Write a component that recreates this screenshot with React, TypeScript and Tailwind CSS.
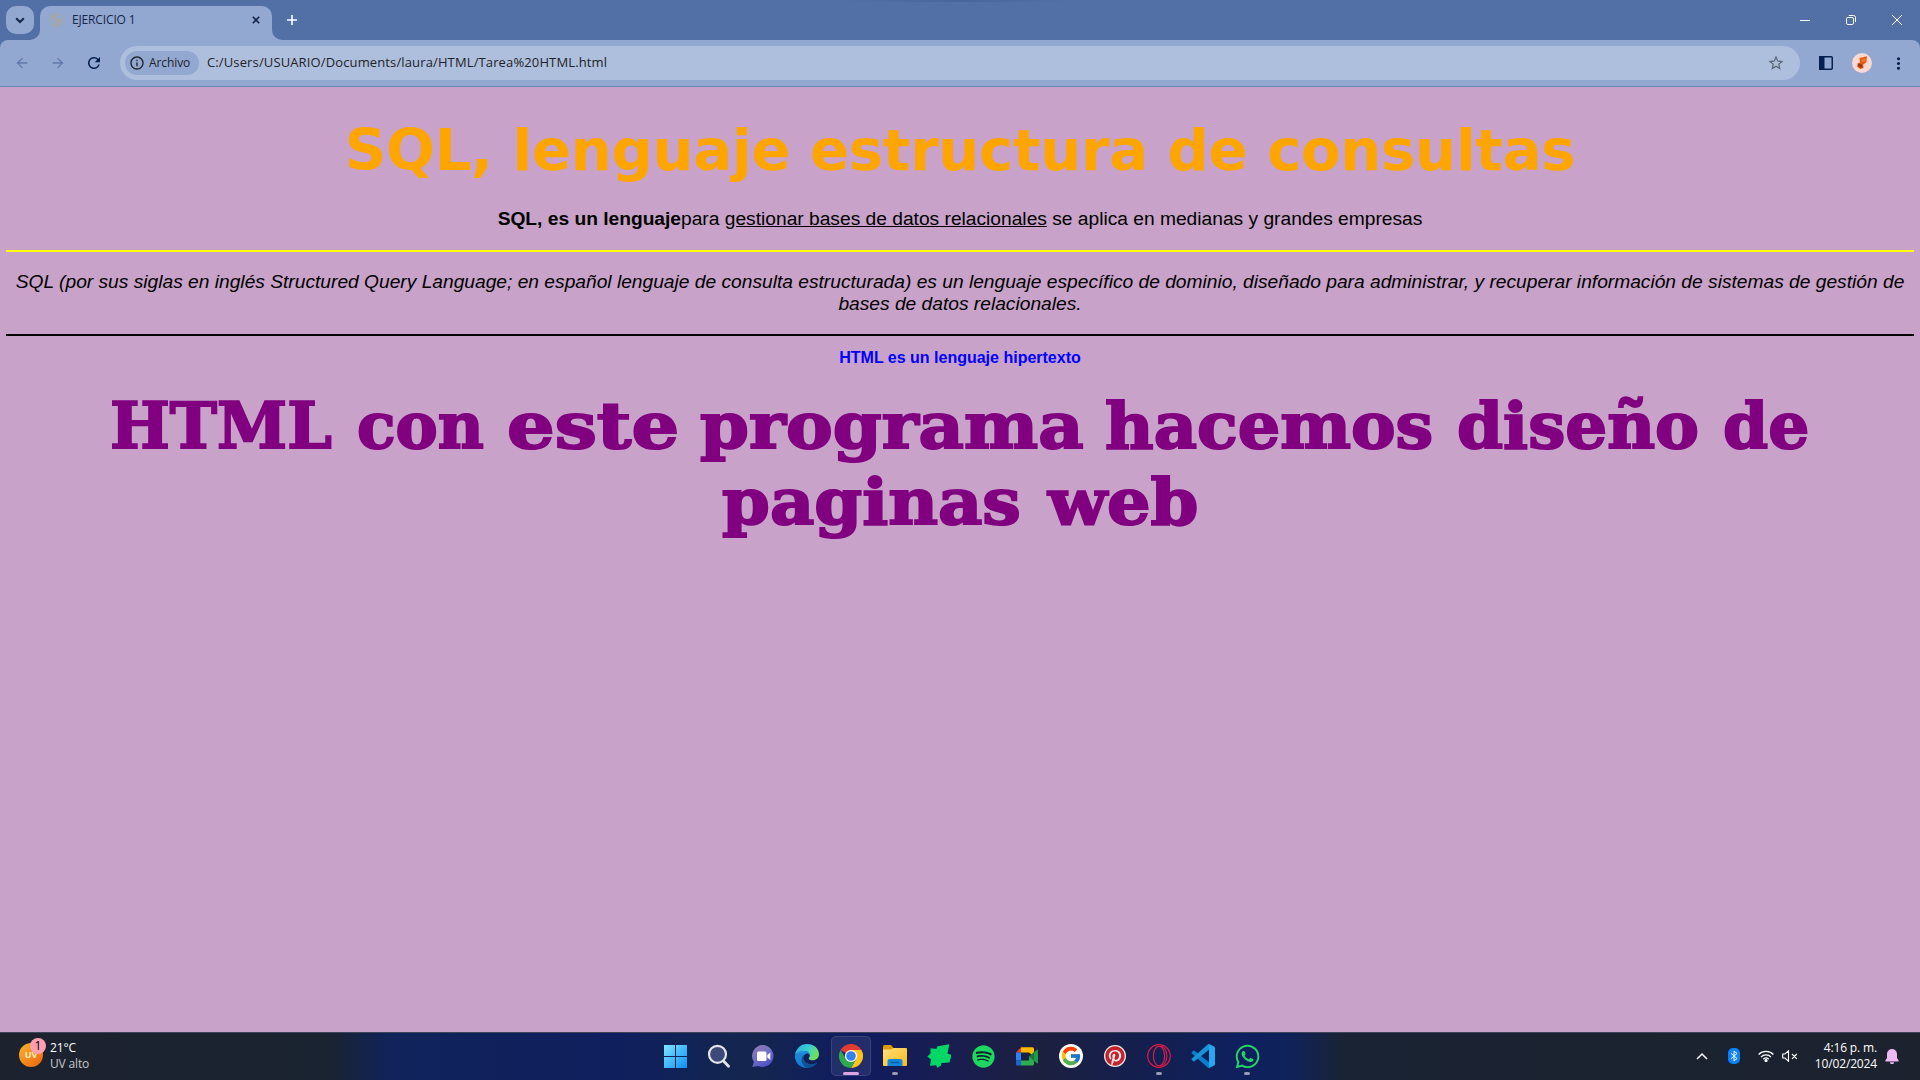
import type { ReactNode } from "react";
import { FaSpotify, FaPinterest, FaWhatsapp } from "react-icons/fa";
import { FcGoogle } from "react-icons/fc";
import { MdStarBorder, MdRefresh, MdArrowBack, MdArrowForward, MdInfoOutline, MdMoreVert } from "react-icons/md";

function TabStrip() {
  return (
    <div className="flex h-10 items-end bg-[#5270a5] text-[#16264a]">
      <div className="mb-1.5 ml-1.5 flex size-7 items-center justify-center rounded-[10px] bg-[#92a8d1]">
        <svg viewBox="0 0 10 10" className="size-2.5" fill="none" stroke="#16264a" strokeWidth="2">
          <path d="M1.2 3.2 5 7l3.8-3.8" />
        </svg>
      </div>
      <div className="relative ml-1.5 flex h-[34px] w-[232px] items-center rounded-t-[10px] bg-[#92a8d1] pb-1.5">
        <svg className="absolute -left-2.5 bottom-0 size-2.5" viewBox="0 0 10 10" fill="#92a8d1"><path d="M10 0v10H0A10 10 0 0 0 10 0z" /></svg>
        <svg className="absolute -right-2.5 bottom-0 size-2.5" viewBox="0 0 10 10" fill="#92a8d1"><path d="M0 0v10h10A10 10 0 0 1 0 0z" /></svg>
        <svg viewBox="0 0 14 14" className="ml-[9px] size-3.5">
          <circle cx="7" cy="7" r="7" fill="#a3a5a9" />
          <path d="M1.500 5.500c2-.5 3 .5 4 2s-.5 2 .5 4.500C3 12 1 9.500 1.200 7zM8 1.600c-2 1-1.500 2-.5 3s2.500.5 3 1.500 2 .8 2 .8C12.500 4 10.500 2 8 1.600zM9 9.500l2.500-.5-2 2.800z" fill="#92a8d1" />
        </svg>
        <span className="ml-[9px] text-[12px] tracking-[-0.15px]">EJERCICIO 1</span>
        <svg viewBox="0 0 10 10" className="mr-3 ml-auto size-2" fill="none" stroke="#16264a" strokeWidth="2">
          <path d="m1 1 8 8M9 1l-8 8" />
        </svg>
      </div>
      <svg viewBox="0 0 10 10" className="mb-[15px] ml-[15px] size-2.5" stroke="white" strokeWidth="1.6"><path d="M5 0v10M0 5h10" /></svg>
      <span className="ml-[543px] h-0.5 w-[235px] self-start bg-linear-to-r from-transparent via-[#49669a] to-transparent" />
      <div className="mb-[15px] ml-auto flex items-center gap-9 pr-[18px]">
        <svg viewBox="0 0 10 10" className="size-2.5" stroke="white"><path d="M0 5.500h10" /></svg>
        <svg viewBox="0 0 10 10" className="size-2.5" fill="none" stroke="white">
          <rect x=".5" y="2.500" width="7" height="7" rx="1.400" />
          <path d="M2.800.5h4.700a2 2 0 0 1 2 2v4.700" />
        </svg>
        <svg viewBox="0 0 10 10" className="size-2.5" stroke="white"><path d="m0 0 10 10M10 0 0 10" /></svg>
      </div>
    </div>
  );
}

function Toolbar() {
  return (
    <div className="bg-[#5270a5]">
      <div className="flex h-[47px] items-center rounded-t-lg border-b border-[#6c84b7] bg-[#92a8d1] text-[#16264a]">
        <MdArrowBack className="ml-[14px] size-4 text-[#6079aa]" />
        <MdArrowForward className="ml-5 size-4 text-[#6079aa]" />
        <MdRefresh className="ml-[19px] size-[18px] text-[#03204f]" />
        <div className="ml-[17px] flex h-[34px] w-[1680px] items-center rounded-full bg-[#aebfdd] pl-[5px]">
          <div className="flex h-6 w-[74px] items-center rounded-full bg-[#92a8d1] pl-[4px] text-[#1f2228]">
            <MdInfoOutline className="size-4" />
            <span className="ml-1 text-[12px] font-medium tracking-[-0.1px]">Archivo</span>
          </div>
          <span className="ml-2 text-[13px] tracking-[0.13px] text-[#1f2228]">C:/Users/USUARIO/Documents/laura/HTML/Tarea%20HTML.html</span>
          <MdStarBorder className="mr-[15px] ml-auto size-[18px] text-[#5b6472]" />
        </div>
        <svg viewBox="0 0 16 16" className="ml-[18px] size-4">
          <rect x="1.750" y="1.750" width="12.500" height="12.500" rx="1" fill="none" stroke="#03204f" strokeWidth="1.500" />
          <path d="M1 1h5.500v14H1z" fill="#03204f" />
        </svg>
        <svg viewBox="0 0 20 20" className="ml-[18px] size-5">
          <circle cx="10" cy="10" r="10" fill="#fbd8d2" />
          <path d="M7.500 5 15 3.200l-.8 6.300-3 2 .3 3.500-3 1-3.500-2.500 1-3 2-1z" fill="#e8590f" />
          <path d="m5.500 10.500 4 .5 1.200 4-4-.8z" fill="#9f3516" />
          <path d="m9 8 2.500 1 2.500-2-2-2z" fill="#f47a2a" />
        </svg>
        <MdMoreVert className="ml-[17px] size-[19px] text-[#03204f]" />
      </div>
    </div>
  );
}

function Word({ children, width, stretch }: { children: string; width: string; stretch: string }) {
  return (
    <span className={width}>
      <span className={`inline-block origin-left whitespace-nowrap ${stretch}`}>{children}</span>
    </span>
  );
}

function Page() {
  return (
    <main className="flex-1 overflow-hidden bg-[#c8a2c8] px-1.5 pt-[29px] text-center font-['Liberation_Sans',Arial,sans-serif] text-[19.2px] leading-[22px] text-black">
      <h1 className="font-['DejaVu_Sans',Verdana,sans-serif] text-[57.6px] leading-[70px] font-bold tracking-[-0.25px] text-[orange]">
        SQL, lenguaje estructura de consultas
      </h1>
      <p className="mt-[22px]">
        <b>SQL, es un lenguaje</b>para <u className="underline">gestionar bases de datos relacionales</u> se aplica en medianas y grandes empresas
      </p>
      <hr className="mt-5 h-0.5 border-0 bg-[#ffff00]" />
      <p className="mt-[19px] italic">
        SQL (por sus siglas en inglés Structured Query Language; en español lenguaje de consulta estructurada) es un lenguaje específico de dominio, diseñado para administrar, y recuperar información de sistemas de gestión de bases de datos relacionales.
      </p>
      <hr className="mt-[19px] h-0.5 border-0 bg-black" />
      <p className="mt-[13px] text-base leading-[18px] font-bold text-[#0000ff]">HTML es un lenguaje hipertexto</p>
      <h2 className="mt-[21px] text-left font-['DejaVu_Serif',serif] text-[64px] leading-[76px] font-bold text-[#800080] [-webkit-text-stroke:2px_#800080]">
        <span className="ml-[104px] flex">
          <Word width="w-[247px]" stretch="scale-x-[0.99]">HTML</Word>
          <Word width="w-[150px]" stretch="scale-x-[0.99]">con</Word>
          <Word width="w-[193px]" stretch="scale-x-[1.17]">este</Word>
          <Word width="w-[405px]" stretch="scale-x-[1.095]">programa</Word>
          <Word width="w-[352px]" stretch="scale-x-[1.045]">hacemos</Word>
          <Word width="w-[266px]" stretch="scale-x-[1.03]">diseño</Word>
          <Word width="w-[86px]" stretch="scale-x-[1.01]">de</Word>
        </span>
        <span className="ml-[716px] flex">
          <Word width="w-[326px]" stretch="scale-x-[1.07]">paginas</Word>
          <Word width="w-[150px]" stretch="scale-x-[1.07]">web</Word>
        </span>
      </h2>
    </main>
  );
}

function TaskIcon({ children, active, running }: { children: ReactNode; active?: boolean; running?: boolean }) {
  return (
    <div className="flex w-11 justify-center">
      <div className={`relative flex size-10 items-center justify-center rounded-[5px] ${active ? "border border-white/10 bg-white/8" : ""}`}>
        {children}
        {active && <span className="absolute bottom-0 h-[3px] w-4 rounded-full bg-[#dda3e4]" />}
        {running && <span className="absolute bottom-px h-[3px] w-1.5 rounded-full bg-[#979cb2]" />}
      </div>
    </div>
  );
}

function Taskbar() {
  return (
    <footer className="grid h-12 grid-cols-[653px_616px_1fr] items-center border-t border-[#3b4458] bg-[linear-gradient(90deg,#1c222e_0px,#1a2331_330px,#10235a_390px,#0f1f5e_620px,#14264e_750px,#101c60_850px,#181d52_940px,#1c2040_1040px,#131f50_1150px,#0e205e_1240px,#10225a_1290px,#1a2333_1345px,#1c222e_1920px)] pb-px text-white">
      <div className="flex items-center pl-[19px] text-[12px] leading-4 tracking-[-0.15px]">
        <div className="relative mb-0.5 flex size-6 items-center justify-center rounded-full bg-linear-to-br from-[#f3b62c] to-[#ee5f0c] text-[9px] font-bold tracking-normal text-[#ffedc4]">
          UV
          <span className="absolute -top-[5px] left-[11px] flex size-4 items-center justify-center rounded-full bg-[#ff9fb0] text-[12px] font-normal text-black">1</span>
        </div>
        <div className="ml-[7px]">
          <p>21°C</p>
          <p className="text-[#c4c7cc]">UV alto</p>
        </div>
      </div>
      <nav className="flex items-center">
        <TaskIcon>
          <svg viewBox="0 0 23 23" className="size-[23px]">
            <defs><linearGradient id="win" x2="1" y2="1"><stop stopColor="#7fe5ff" /><stop offset="1" stopColor="#0c8ff5" /></linearGradient></defs>
            <path d="M0 0h11v11H0zM12 0h11v11H12zM0 12h11v11H0zM12 12h11v11H12z" fill="url(#win)" />
          </svg>
        </TaskIcon>
        <TaskIcon>
          <svg viewBox="0 0 24 24" className="size-6" fill="#3c4979" stroke="#e3e5e9" strokeWidth="2.200">
            <path d="m16.500 17 5 5.200" strokeWidth="2.800" strokeLinecap="round" />
            <circle cx="10.500" cy="10.300" r="8.500" />
          </svg>
        </TaskIcon>
        <TaskIcon>
          <svg viewBox="0 0 24 24" className="size-6">
            <defs><linearGradient id="chat" x2=".6" y2="1"><stop stopColor="#9b78ad" /><stop offset=".5" stopColor="#7273c4" /><stop offset="1" stopColor="#4d50c9" /></linearGradient></defs>
            <path d="M12.500 1A11 11 0 1 1 7 22L1.300 23l1.600-5A11 11 0 0 1 12.500 1z" fill="url(#chat)" />
            <rect x="6" y="7.500" width="9.500" height="9.500" rx="1.500" fill="white" />
            <path d="m16.300 11 3-2.500v7.500l-3-2.500z" fill="white" />
          </svg>
        </TaskIcon>
        <TaskIcon>
          <svg viewBox="0 0 24 24" className="size-6">
            <defs>
              <linearGradient id="edgeTop" x2="1" y2=".4"><stop stopColor="#2aa7e4" /><stop offset=".55" stopColor="#37cfd6" /><stop offset="1" stopColor="#6fe05a" /></linearGradient>
              <linearGradient id="edgeLow" x2=".8" y2="1"><stop stopColor="#28a5e9" /><stop offset="1" stopColor="#0b55ae" /></linearGradient>
            </defs>
            <path d="M0 11.500C.6 4.800 5.500 0 12 0c7 0 12 4.700 12 10.300 0 3.700-2.900 6-6.200 6-2.500 0-4.100-.8-4.100-1.800 0-.8 1.100-1.200 1.100-3.200C14.800 9 12.500 7 9.300 6.900 5 6.800 1.300 8.700 0 11.500z" fill="url(#edgeTop)" />
            <path d="M0 12C1 8.700 4.600 6.500 8.600 6.700c3.500.2 6.200 2.100 6.200 4.700-.8-1.500-2.200-2-3.300-1.700-3 .8-4 4-2.500 6.800 2 3.800 7.500 5.200 12.800 2.200.3-.2.500.1.400.4C20 22 16.200 24 12.200 24 5 24 0 18.500 0 12z" fill="url(#edgeLow)" />
            <path d="M9 9.500c-2.400 1.800-3.500 4.900-2.500 8 1 3.200 3.400 5.500 6 6.500C5 24 0 18.500 0 12c2-3 5.500-4 9-2.500z" fill="#1482da" opacity=".65" />
            <path d="M11.500 9.700c-3 .8-4 4-2.500 6.800 2 3.800 7.500 5.200 12.800 2.200l.4.400C20 22 16.200 24 12.200 24 7.700 22 5.500 17.500 7 13.500c.8-2.200 2.500-3.500 4.500-3.800z" fill="#114a8b" opacity=".8" />
          </svg>
        </TaskIcon>
        <TaskIcon active>
          <svg viewBox="0 0 24 24" className="size-6">
            <path d="M12 12 1.600 6A12 12 0 0 1 22.400 6z" fill="#e33b2e" />
            <path d="M12 12 22.400 6A12 12 0 0 1 12 24l5-9z" fill="#fcc31e" />
            <path d="M12 12 7 15 1.600 6A12 12 0 0 0 12 24l5-9z" fill="#2da94f" />
            <path d="M12 6h10.400L17.200 15z" fill="#fcc31e" />
            <circle cx="12" cy="12" r="6.100" fill="white" />
            <circle cx="12" cy="12" r="4.800" fill="#357ff0" />
          </svg>
        </TaskIcon>
        <TaskIcon running>
          <svg viewBox="0 0 24 24" className="size-6">
            <defs><linearGradient id="folder" x2="1" y2="1"><stop stopColor="#ffe07c" /><stop offset="1" stopColor="#fbb91c" /></linearGradient></defs>
            <path d="M0 2.500Q0 1 1.500 1H8l2.500 3-2 4H0z" fill="#dd9c05" />
            <path d="M0 5.500h8L10.500 4H23q1 0 1 1v16q0 1-1 1H1q-1 0-1-1z" fill="url(#folder)" />
            <path d="M4.500 22v-5q0-2 2-2h11q2 0 2 2v5z" fill="#1287dc" />
            <path d="M8 18.500h8" stroke="#0a5ca8" strokeWidth="1.300" strokeLinecap="round" />
          </svg>
        </TaskIcon>
        <TaskIcon>
          <svg viewBox="0 0 24 24" className="size-6"><path d="M3.500 4.300 9.500 5l1-2.800L22.300.2 20.500 9.500l4 1.500-2 7.500-8 .5-.5 2.500-3.500 2.300-1.500-2.500-6 .5 1-6.300L.3 12.500l3.200-3z" fill="#00d765" /></svg>
        </TaskIcon>
        <TaskIcon>
          <span className="flex size-[22px] items-center justify-center rounded-full bg-[#111d2b]"><FaSpotify className="size-[23px] shrink-0 text-[#1ed760]" /></span>
        </TaskIcon>
        <TaskIcon>
          <svg viewBox="0 0 24 24" className="size-6">
            <path d="m1 8.500 5-5.200v5.200z" fill="#e8402f" />
            <path d="M6 3.300h11.500q1.500 0 1.500 1.500v7.500l-5-3.800H6z" fill="#ffba00" />
            <path d="M1 8.500h5v8H1z" fill="#2b83f5" />
            <path d="M1 16.500h5v5H2.500Q1 21.500 1 20z" fill="#1766d4" />
            <path d="M6 16.500h8v-4h5V20q0 1.500-1.500 1.500H6z" fill="#2eac50" />
            <path d="m14 12.500 8-6.800q1-.6 1 .5v12.600q0 1-1 .4z" fill="#22994a" />
            <path d="m14 12.500 5-4.200v8.400z" fill="#177536" />
          </svg>
        </TaskIcon>
        <TaskIcon>
          <span className="flex size-6 items-center justify-center rounded-full bg-white"><FcGoogle className="size-[22px]" /></span>
        </TaskIcon>
        <TaskIcon>
          <span className="flex size-[22px] items-center justify-center rounded-full bg-[#e9e9ec]"><FaPinterest className="size-5 text-[#c3222a]" /></span>
        </TaskIcon>
        <TaskIcon running>
          <svg viewBox="0 0 24 24" className="size-6" fill="none" stroke="#dd1a4b" strokeWidth="1.200">
            <circle cx="12" cy="12" r="11.300" />
            <ellipse cx="12" cy="12" rx="5.600" ry="9.800" />
            <path d="M13.500 2.200c4 .3 6.300 4.600 6.300 9.800s-2.300 9.500-6.300 9.800" />
          </svg>
        </TaskIcon>
        <TaskIcon>
          <svg viewBox="0 0 24 24" className="size-6">
            <path d="M.6 8.300 2.300 6.800q.6-.4 1.200 0L18 18.200V24h-.8L.6 9.300z" fill="#0b7dcc" />
            <path d="M.6 15.700 2.300 17.200q.6.400 1.200 0L18 5.800V0h-.8L.6 14.700z" fill="#1793d8" />
            <path d="m18 0 5 2.400q1 .5 1 1.500v16.200q0 1-1 1.500L18 24z" fill="#27a7f2" />
          </svg>
        </TaskIcon>
        <TaskIcon running>
          <FaWhatsapp className="size-[27px] text-[#25d366]" />
        </TaskIcon>
      </nav>
      <div className="flex items-center justify-end pr-[21px]">
        <svg viewBox="0 0 12 8" className="mr-5 h-2 w-3" fill="none" stroke="white" strokeWidth="1.500"><path d="m1 7 5-5 5 5" /></svg>
        <svg viewBox="0 0 12 16" className="mr-[18px] h-4 w-3">
          <rect width="12" height="16" rx="5" fill="#0a82fb" />
          <path d="m3 5.300 6 5.200L6 13V3l3 2.500-6 5.200" fill="none" stroke="white" />
        </svg>
        <svg viewBox="0 0 16 12" className="mr-2 h-3 w-4" fill="none" stroke="white" strokeWidth="1.200">
          <path d="M.6 4.500a10.500 10.500 0 0 1 14.800 0M3 7a7 7 0 0 1 10 0M5.300 9.200a4 4 0 0 1 5.400 0" />
          <circle cx="8" cy="10.600" r="1" fill="white" />
        </svg>
        <svg viewBox="0 0 16 12" className="mr-[17px] h-3 w-4" fill="none" stroke="white" strokeWidth="1.100">
          <path d="M.7 4h2.300L6.500.8v10.400L3 8H.7zM10 4l4.800 4.800M14.800 4 10 8.800" />
        </svg>
        <div className="mr-2 text-right text-[12px] leading-4 tracking-[-0.15px] whitespace-nowrap">
          <p>4:16 p. m.</p>
          <p>10/02/2024</p>
        </div>
        <svg viewBox="0 0 14 15" className="h-[15px] w-3.5" fill="#f0b9f2">
          <path d="M7 0a5 5 0 0 1 5 5v4l1.700 2.500q.2 1-.7 1H1q-.9 0-.7-1L2 9V5a5 5 0 0 1 5-5zM5 13.300h4a2 2 0 0 1-4 0z" />
        </svg>
      </div>
    </footer>
  );
}

export default function App() {
  return (
    <div className="flex h-[1080px] w-[1920px] flex-col overflow-hidden font-['Open_Sans','Noto_Sans',sans-serif]">
      <TabStrip />
      <Toolbar />
      <Page />
      <Taskbar />
    </div>
  );
}
